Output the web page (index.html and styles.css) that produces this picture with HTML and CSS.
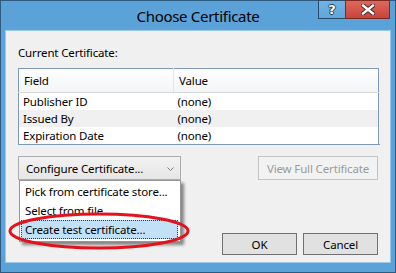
FILE: index.html
```html
<!DOCTYPE html>
<html lang="en">
<head>
  <meta charset="UTF-8">
  <title>Choose Certificate</title>
  <link rel="stylesheet" href="styles.css">
</head>
<body>
  <div class="window">
    <div class="titlebar">
      <span class="title">Choose Certificate</span>
    </div>
    <div class="caption-buttons">
      <span class="cap-btn help">?</span>
      <span class="cap-btn close">
        <svg width="14" height="11" viewBox="0 0 14 11">
          <path d="M2 1.5 L12 9.5 M12 1.5 L2 9.5" stroke="#3a2020" stroke-width="4.2" stroke-linecap="square"/>
          <path d="M2 1.5 L12 9.5 M12 1.5 L2 9.5" stroke="#fff" stroke-width="2.4" stroke-linecap="square"/>
        </svg>
      </span>
    </div>

    <div class="content">
      <div class="label">Current Certificate:</div>

      <table class="cert-table">
        <thead>
          <tr>
            <th class="col-field">Field</th>
            <th class="col-value">Value</th>
            <th class="col-pad"></th>
          </tr>
        </thead>
        <tbody>
          <tr><td>Publisher ID</td><td>(none)</td><td></td></tr>
          <tr class="alt"><td>Issued By</td><td>(none)</td><td></td></tr>
          <tr class="last"><td>Expiration Date</td><td>(none)</td><td></td></tr>
        </tbody>
      </table>

      <div class="actions">
        <div class="combo-wrap">
          <div class="combo">
            <span>Configure Certificate...</span>
            <svg class="chevron" width="7" height="4" viewBox="0 0 7 4">
              <polyline points="0.5,0.5 3.5,3.5 6.5,0.5" fill="none" stroke="#7a7a7a" stroke-width="1"/>
            </svg>
          </div>
          <ul class="menu">
            <li class="menu-item">Pick from certificate store...</li>
            <li class="menu-item">Select from file...</li>
            <li class="menu-item active">Create test certificate...</li>
          </ul>
          <!-- red callout drawn over the menu -->
          <svg class="callout" width="184" height="40" viewBox="0 0 184 40">
            <ellipse cx="92" cy="20" rx="89" ry="17" fill="none" stroke="#e3121c" stroke-width="3"/>
          </svg>
        </div>
        <button class="btn disabled">View Full Certificate</button>
      </div>

      <div class="footer">
        <button class="btn">OK</button>
        <button class="btn">Cancel</button>
      </div>
    </div>
  </div>
</body>
</html>
```

FILE: styles.css
```css
body {
  margin: 0;
  font-family: "Noto Sans", "Open Sans", sans-serif;
  font-size: 11.5px;
  letter-spacing: -0.15px;
  color: #000;
}
.window {
  position: relative;
  width: 396px;
  height: 273px;
  box-sizing: border-box;
  border: 1px solid #2d5a80;
  background-color: #5aa2d8; /* win8 frame blue */
  padding: 0 4px 9px;
  display: flex;
  flex-direction: column;
}
.titlebar {
  height: 29px;
  display: flex;
  align-items: center;
  justify-content: center;
}
.title {
  font-size: 15px;
  letter-spacing: -0.3px;
  color: #000;
  margin-top: 1px;
}
.caption-buttons {
  position: absolute;
  top: -1px;
  right: 5px;
  display: flex;
}
.cap-btn {
  height: 19px;
  box-sizing: border-box;
  display: flex;
  align-items: center;
  justify-content: center;
  border: 1px solid #2b4c68;
}
.help {
  width: 27px;
  border-right: none;
  background: linear-gradient(#73b3e3, #5ea6dc);
  color: #fff;
  font-family: "DejaVu Sans", sans-serif;
  font-weight: bold;
  font-size: 13px;
  text-shadow: -1px 0 #2b3d50, 1px 0 #2b3d50, 0 -1px #2b3d50, 0 1px #2b3d50;
}
.close {
  width: 45px;
  background: linear-gradient(#e0675c, #c8443a);
  border-color: #7e2a24;
}
.content {
  flex: 1;
  background-color: #f0f0f0;
  border: 1px solid #9cc8ea;
  padding: 14px 12px 7px;
  display: flex;
  flex-direction: column;
}
.label {
  line-height: 15px;
}
.cert-table {
  margin-top: 8px;
  width: 360px;
  border-collapse: collapse;
  border: 1px solid #7f9ab8;
  background-color: #fff;
  table-layout: fixed;
}
.cert-table th {
  height: 23px;
  padding: 0 0 0 5px;
  text-align: left;
  font-weight: normal;
  background: linear-gradient(#ffffff, #f3f4f6);
  border-bottom: 1px solid #d8d8d8;
  border-right: 1px solid #e3e5e8;
}
.cert-table th.col-pad {
  border-right: none;
}
.col-field {
  width: 149px;
}
.col-value {
  width: 199px;
}
.cert-table td {
  height: 17px;
  padding: 0 0 0 4px;
  line-height: 17px;
}
.cert-table tr.alt td {
  background-color: #f0f0f0;
}
.cert-table tr.last td {
  height: 16px;
}
.actions {
  margin-top: 11px;
  display: flex;
  justify-content: space-between;
}
.combo-wrap {
  position: relative;
}
.combo {
  width: 163px;
  height: 24px;
  box-sizing: border-box;
  border: 1px solid #acacac;
  background: linear-gradient(#f2f2f2, #e6e6e6);
  padding: 0 6px 0 7px;
  display: flex;
  align-items: center;
  justify-content: space-between;
}
.chevron {
  margin-top: 1px;
}
.menu {
  position: absolute;
  left: 1px;
  top: 24px;
  width: 162px;
  box-sizing: border-box;
  margin: 0;
  padding: 1px 0 2px;
  list-style: none;
  background-color: #fff;
  border: 1px solid #979797;
  box-shadow: 3px 3px 3px rgba(0, 0, 0, 0.45);
}
.menu-item {
  height: 19px;
  box-sizing: border-box;
  line-height: 17px;
  margin: 0 2px 0 1px;
  padding: 0 3px;
  border: 1px solid transparent;
  white-space: nowrap;
}
.menu-item.active {
  background-color: #c3e1f6;
  border: 1px dotted #2e3a46;
}
.callout {
  position: absolute;
  left: -11px;
  top: 55px;
}
.btn {
  font-family: inherit;
  font-size: inherit;
  letter-spacing: inherit;
  color: #000;
  height: 24px;
  box-sizing: border-box;
  border: 1px solid #707070;
  background-color: #e1e1e1;
  padding: 0;
}
.btn.disabled {
  width: 120px;
  color: #9a9a9a;
  border-color: #c3c3c3;
  background-color: #f2f2f2;
}
.footer {
  margin-top: auto;
  display: flex;
  justify-content: flex-end;
  gap: 6px;
}
.footer .btn {
  width: 75px;
  height: 22px;
}
```
